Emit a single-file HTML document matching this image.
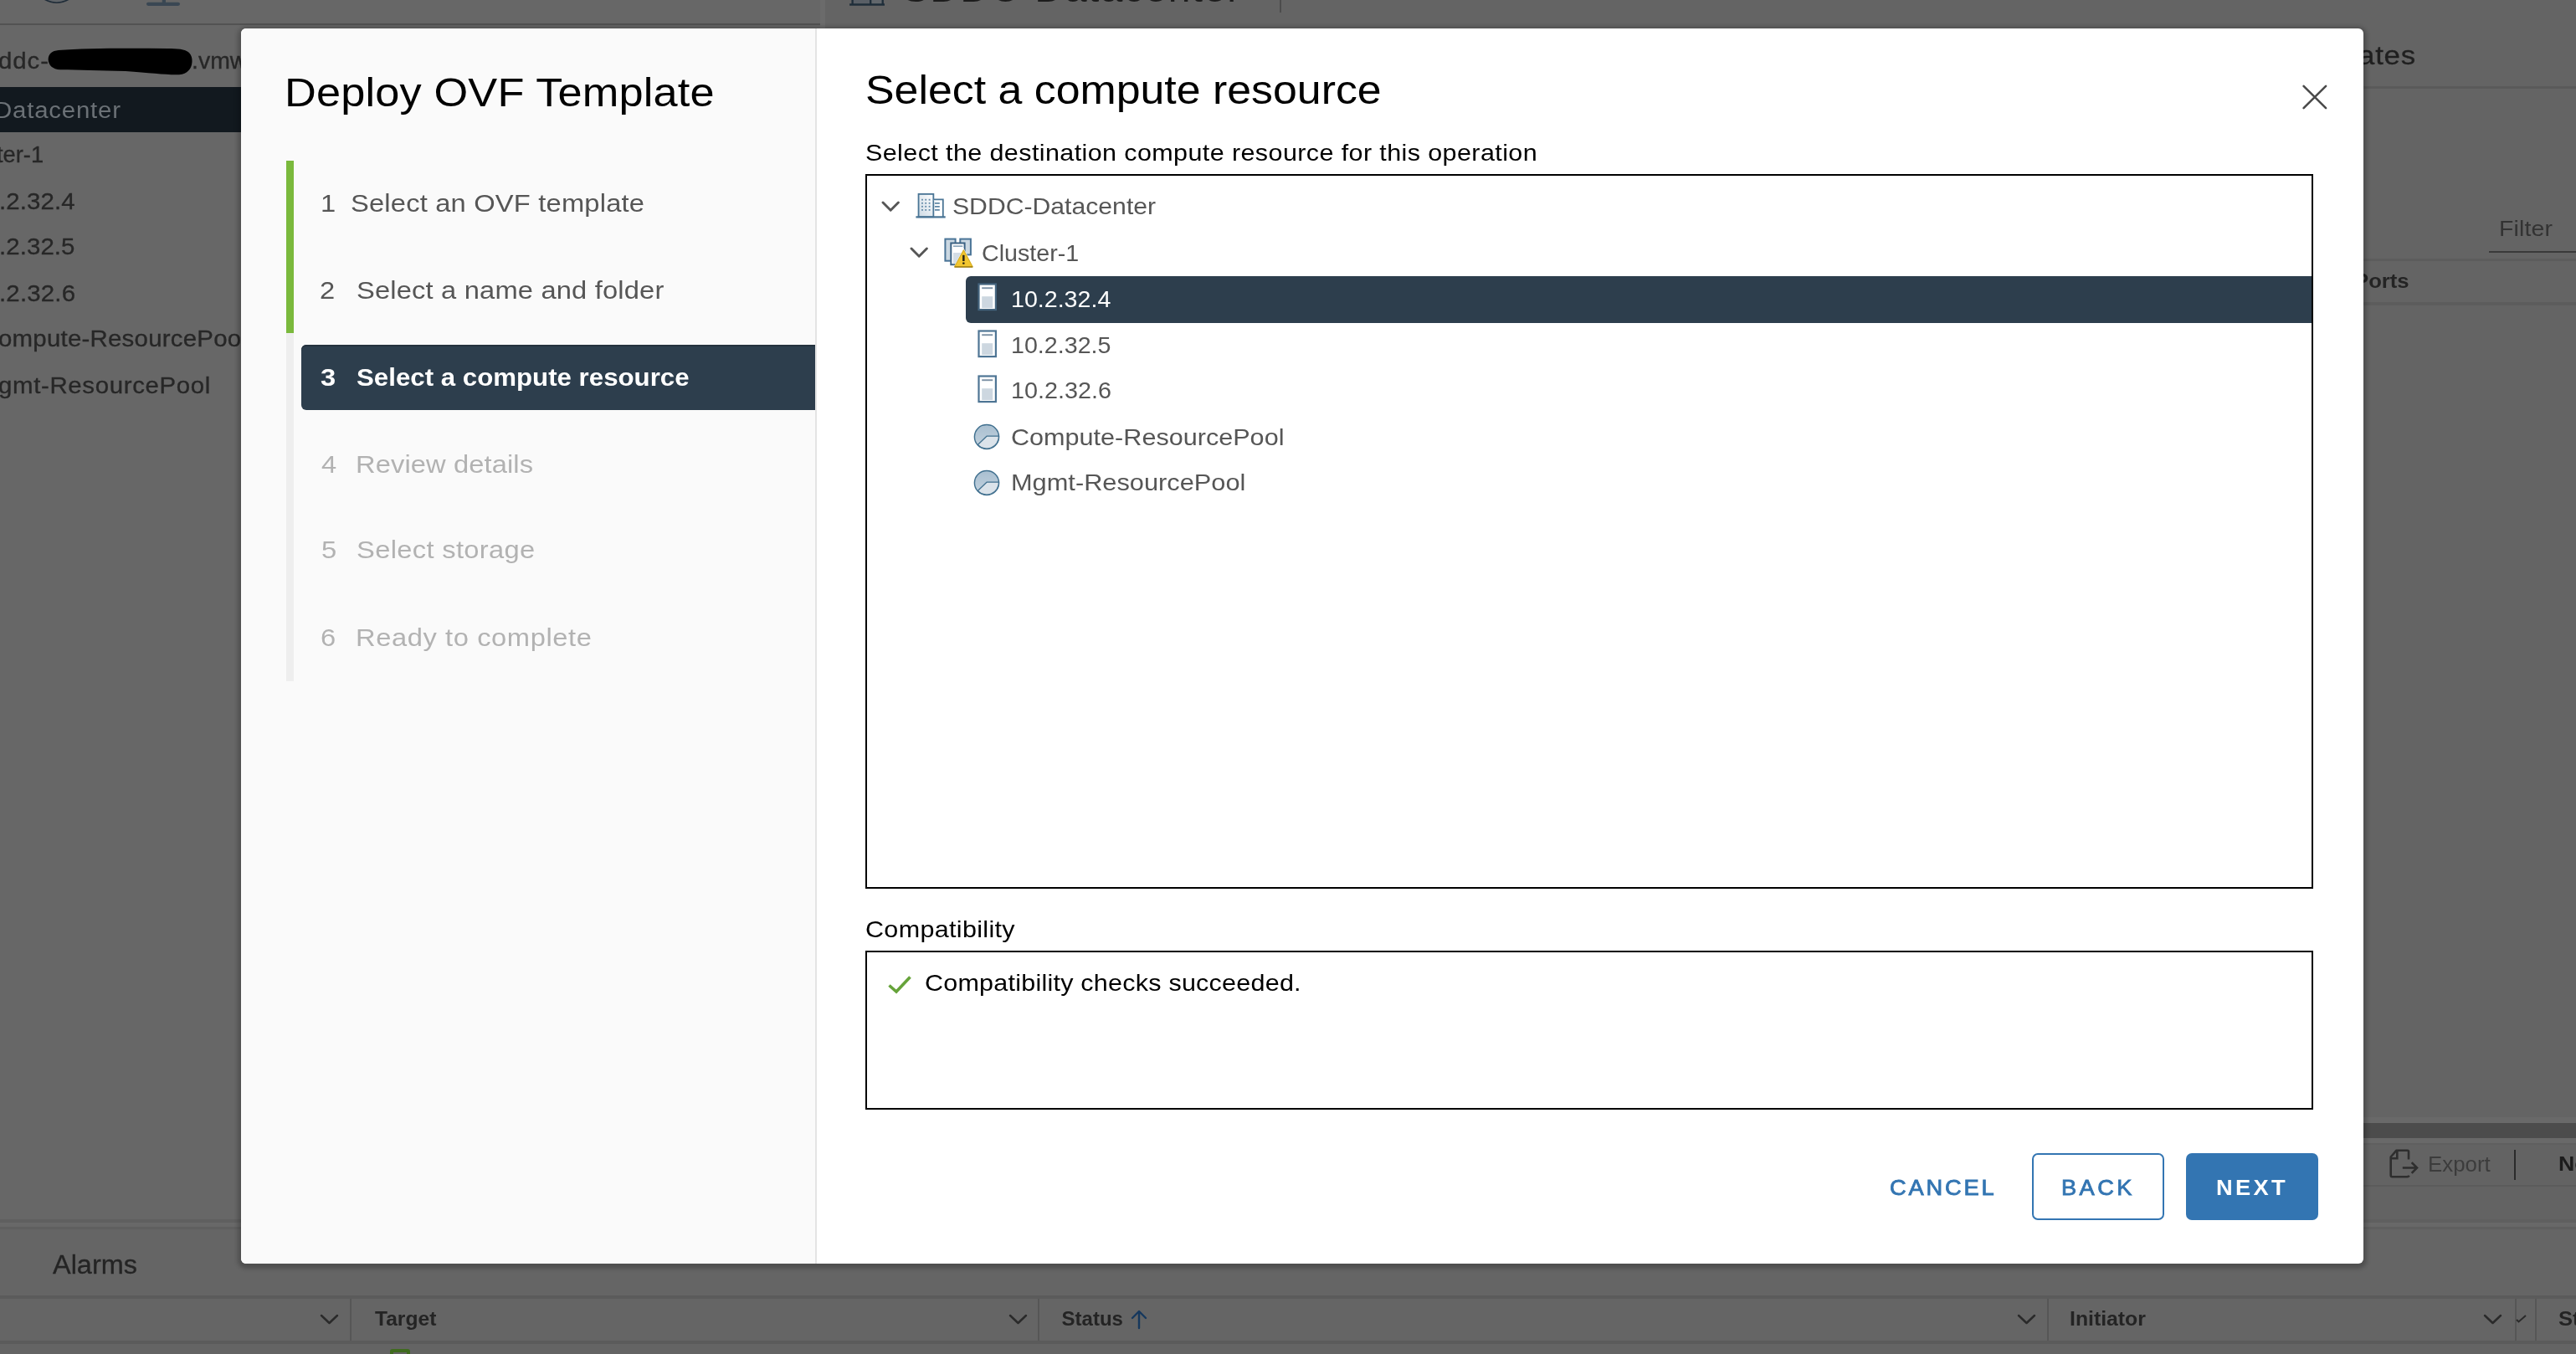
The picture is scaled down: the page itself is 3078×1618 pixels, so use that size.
<!DOCTYPE html>
<html><head><meta charset="utf-8"><title>Deploy OVF Template</title><style>
html,body{margin:0;padding:0}
body{width:3078px;height:1618px;position:relative;overflow:hidden;background:#666;font-family:"Liberation Sans",sans-serif}
.t{position:absolute;white-space:nowrap;line-height:1;transform-origin:0 0}
#bg{position:absolute;left:0;top:0;width:3078px;height:1618px;overflow:hidden;will-change:transform}
#modal{position:absolute;left:0;top:0;width:3078px;height:1618px;will-change:transform}
#modal:before{content:"";position:absolute;left:288px;top:34px;width:2536px;height:1475.5px;background:#fff;border-radius:6px;box-shadow:0 2px 5px 4px rgba(0,0,0,.22)}
#side{position:absolute;left:288px;top:34px;width:686px;height:1475.5px;background:#fafafa;border-right:2px solid #e4e4e4;border-radius:6px 0 0 6px}
#active{position:absolute;left:360px;top:412px;width:614px;height:78px;background:#2d3e4d;border-radius:6px 0 0 6px;box-shadow:inset 0 2px 0 #25323e}
#tree{position:absolute;left:1034px;top:208px;width:1726px;height:850px;border:2px solid #000}
#compat{position:absolute;left:1034px;top:1136px;width:1726px;height:186px;border:2px solid #000}
#sel{position:absolute;left:1154px;top:330px;width:1608px;height:55.7px;background:#2d3e4d;border-radius:6px 0 0 6px}
#back{position:absolute;left:2428px;top:1378px;width:154px;height:76px;border:2px solid #3375b2;border-radius:7px}
#next{position:absolute;left:2612px;top:1378px;width:158px;height:80px;background:#3375b2;border-radius:7px}
</style></head><body>
<div id="bg">
<div style="position:absolute;left:0px;top:0px;width:980px;height:1457px;background:#676767;"></div>
<div style="position:absolute;left:986px;top:0px;width:2092px;height:1457px;background:#646464;"></div>
<div style="position:absolute;left:0px;top:28px;width:980px;height:2px;background:#525252;"></div>
<div style="position:absolute;left:980px;top:0px;width:6px;height:40px;background:#6b6b6b;"></div>
<svg style="position:absolute;left:40px;top:0" width="200" height="10" viewBox="0 0 200 10"><path d="M9.7 -3 Q27.7 9.5 45.7 -3" fill="#5f6468" stroke="#1f2c38" stroke-width="1.6"/><rect x="135" y="2.7" width="40" height="4.2" rx="2.1" fill="#3a4753"/><rect x="153.8" y="-2" width="4.2" height="6" fill="#3a4753"/></svg>
<svg style="position:absolute;left:1014px;top:0" width="50" height="10" viewBox="0 0 50 10"><rect x="4.6" y="0" width="21.6" height="5" fill="#595f66"/><rect x="26.2" y="0" width="14.5" height="5" fill="#62676c"/><path d="M1.1 5.5H43" stroke="#1f2e3a" stroke-width="2.3"/><path d="M4.6 0V5M26.2 0V5M40.7 0V5" stroke="#1f2e3a" stroke-width="2.3"/></svg>
<div class="t " style="left:1078.00px;top:-34.75px;font-size:44px;font-weight:400;color:#1c1c1c;letter-spacing:1.164px;transform:scaleX(1.0900);">SDDC-Datacenter</div>
<div style="position:absolute;left:1529px;top:0px;width:2px;height:15px;background:#4c4c4c;"></div>
<div class="t " style="left:-2.42px;top:59.94px;font-size:27px;font-weight:400;color:#272727;letter-spacing:0.836px;transform:scaleX(1.0900);-webkit-text-stroke:0.3px #272727;">ddc-</div>
<div class="t " style="left:229.28px;top:59.94px;font-size:27px;font-weight:400;color:#272727;letter-spacing:-0.000px;transform:scaleX(1.0537);-webkit-text-stroke:0.3px #272727;">.vmw</div>
<svg style="position:absolute;left:50px;top:50px" width="190" height="48" viewBox="50 50 190 48"><path d="M57.6 71 C58 64 62 60.8 70 60 C100 57.6 150 57.4 200 58 C212 58 221 58.5 226 63 C229 66 229.8 70 229.5 74 C229 82 224 88.5 214 89.2 C200 89.8 180 87 150 85 C120 84 95 83.6 72 83.2 C63 83 58 78 57.6 71 Z" fill="#000"/></svg>
<div style="position:absolute;left:0px;top:104px;width:288px;height:54px;background:#12191f;"></div>
<div class="t " style="left:-6.80px;top:118.54px;font-size:27px;font-weight:400;color:#6b7176;letter-spacing:0.712px;transform:scaleX(1.0900);">Datacenter</div>
<div class="t " style="left:-4.00px;top:172.34px;font-size:27px;font-weight:400;color:#272727;letter-spacing:0.000px;transform:scaleX(1.0106);-webkit-text-stroke:0.3px #272727;">ter-1</div>
<div class="t " style="left:-0.80px;top:228.34px;font-size:27px;font-weight:400;color:#272727;letter-spacing:0.081px;transform:scaleX(1.0900);-webkit-text-stroke:0.3px #272727;">.2.32.4</div>
<div class="t " style="left:-0.80px;top:282.34px;font-size:27px;font-weight:400;color:#272727;letter-spacing:0.075px;transform:scaleX(1.0900);-webkit-text-stroke:0.3px #272727;">.2.32.5</div>
<div class="t " style="left:-0.80px;top:338.34px;font-size:27px;font-weight:400;color:#272727;letter-spacing:0.152px;transform:scaleX(1.0900);-webkit-text-stroke:0.3px #272727;">.2.32.6</div>
<div class="t " style="left:-2.42px;top:392.04px;font-size:27px;font-weight:400;color:#272727;letter-spacing:0.207px;transform:scaleX(1.0900);-webkit-text-stroke:0.3px #272727;">ompute-ResourcePoo</div>
<div class="t " style="left:-2.42px;top:447.54px;font-size:27px;font-weight:400;color:#272727;letter-spacing:0.590px;transform:scaleX(1.0900);-webkit-text-stroke:0.3px #272727;">gmt-ResourcePool</div>
<div class="t " style="left:2817.91px;top:50.41px;font-size:32px;font-weight:400;color:#1f1f1f;letter-spacing:0.689px;transform:scaleX(1.0900);-webkit-text-stroke:0.3px #1f1f1f;">ates</div>
<div style="position:absolute;left:2824px;top:103px;width:254px;height:3px;background:#5a5a5a;"></div>
<div class="t " style="left:2986.29px;top:259.99px;font-size:26px;font-weight:400;color:#333;letter-spacing:0.161px;transform:scaleX(1.0900);">Filter</div>
<div style="position:absolute;left:2974px;top:299.5px;width:104px;height:2.2px;background:#3a3a3a;"></div>
<div style="position:absolute;left:2824px;top:309px;width:254px;height:3px;background:#5c5c5c;"></div>
<div class="t " style="left:2813.39px;top:323.68px;font-size:24px;font-weight:700;color:#242424;letter-spacing:0.000px;transform:scaleX(1.0701);">Ports</div>
<div style="position:absolute;left:2824px;top:361px;width:254px;height:4px;background:#5c5c5c;"></div>
<div style="position:absolute;left:2824px;top:1335px;width:254px;height:7px;background:#696969;"></div>
<div style="position:absolute;left:2824px;top:1342px;width:254px;height:18px;background:#4c4c4c;"></div>
<div style="position:absolute;left:2824px;top:1360px;width:254px;height:6px;background:#696969;"></div>
<div style="position:absolute;left:2824px;top:1366px;width:254px;height:2px;background:#5f5f5f;"></div>
<div style="position:absolute;left:2824px;top:1368px;width:254px;height:48px;background:#636363;"></div>
<svg style="position:absolute;left:2852px;top:1371px" width="40" height="40" viewBox="0 0 40 40"><path d="M26 14.5V5.2Q26 3.7 24.5 3.7H11.5L4.7 11.5V33.5Q4.7 35.2 6.4 35.2H24.3Q26 35.2 26.6 33.8" fill="none" stroke="#2e2e2e" stroke-width="2.6" stroke-linejoin="round"/><path d="M4.7 13.2H12.3V4" fill="none" stroke="#2e2e2e" stroke-width="2.6"/><path d="M18.8 24.5H35.5M29.7 18.2L36 24.5L29.7 30.8" fill="none" stroke="#2e2e2e" stroke-width="2.6"/></svg>
<div class="t " style="left:2900.98px;top:1379.04px;font-size:25px;font-weight:400;color:#3c3c3c;letter-spacing:0.000px;transform:scaleX(1.0343);">Export</div>
<div style="position:absolute;left:3004px;top:1374px;width:2.4px;height:36px;background:#2b2b2b;"></div>
<div class="t " style="left:3057.23px;top:1379.26px;font-size:24.5px;font-weight:700;color:#1c1c1c;letter-spacing:0.000px;transform:scaleX(1.0900);">Ne</div>
<div style="position:absolute;left:2824px;top:1416px;width:254px;height:4px;background:#5b5b5b;"></div>
<div style="position:absolute;left:2824px;top:1418px;width:254px;height:39px;background:#636363;"></div>
<div style="position:absolute;left:0px;top:1457px;width:3078px;height:161px;background:#656565;"></div>
<div style="position:absolute;left:0px;top:1457px;width:3078px;height:4px;background:#5f5f5f;"></div>
<div style="position:absolute;left:0px;top:1461px;width:3078px;height:5px;background:#686868;"></div>
<div style="position:absolute;left:0px;top:1466px;width:3078px;height:3px;background:#5f5f5f;"></div>
<div class="t " style="left:62.50px;top:1496.36px;font-size:31px;font-weight:400;color:#242424;letter-spacing:-0.000px;transform:scaleX(1.0473);-webkit-text-stroke:0.3px #242424;">Alarms</div>
<div style="position:absolute;left:0px;top:1548px;width:3078px;height:4px;background:#5b5b5b;"></div>
<div style="position:absolute;left:0px;top:1602px;width:3078px;height:4px;background:#5b5b5b;"></div>
<div style="position:absolute;left:0px;top:1606px;width:3078px;height:12px;background:#646464;"></div>
<svg style="position:absolute;left:382px;top:1570px" width="23" height="14" viewBox="-2 -2 23 14"><path d="M0 0L9.5 9L19 0" fill="none" stroke="#2a2a2a" stroke-width="2.5" stroke-linecap="round" stroke-linejoin="round"/></svg>
<div style="position:absolute;left:418px;top:1552px;width:2px;height:50px;background:#565656;"></div>
<div class="t " style="left:448.00px;top:1563.68px;font-size:24px;font-weight:700;color:#242424;letter-spacing:0.000px;transform:scaleX(1.0245);">Target</div>
<div style="position:absolute;left:466px;top:1612px;width:16px;height:8px;border:4px solid #3f6a1f;border-radius:3px"></div>
<svg style="position:absolute;left:1205px;top:1570px" width="23" height="14" viewBox="-2 -2 23 14"><path d="M0 0L9.5 9L19 0" fill="none" stroke="#2a2a2a" stroke-width="2.5" stroke-linecap="round" stroke-linejoin="round"/></svg>
<div style="position:absolute;left:1240px;top:1552px;width:2px;height:50px;background:#565656;"></div>
<div class="t " style="left:1268.62px;top:1563.68px;font-size:24px;font-weight:700;color:#242424;letter-spacing:0.000px;transform:scaleX(1.0000);">Status</div>
<svg style="position:absolute;left:1350px;top:1565px" width="22" height="24" viewBox="0 0 22 24"><path d="M11 22V3M3 10L11 2L19 10" fill="none" stroke="#16385d" stroke-width="2.4" stroke-linecap="round" stroke-linejoin="round"/></svg>
<svg style="position:absolute;left:2410px;top:1570px" width="23" height="14" viewBox="-2 -2 23 14"><path d="M0 0L9.5 9L19 0" fill="none" stroke="#2a2a2a" stroke-width="2.5" stroke-linecap="round" stroke-linejoin="round"/></svg>
<div style="position:absolute;left:2446px;top:1552px;width:2px;height:50px;background:#565656;"></div>
<div class="t " style="left:2473.45px;top:1563.68px;font-size:24px;font-weight:700;color:#242424;letter-spacing:0.000px;transform:scaleX(1.0330);">Initiator</div>
<svg style="position:absolute;left:2967px;top:1570px" width="23" height="14" viewBox="-2 -2 23 14"><path d="M0 0L9.5 9L19 0" fill="none" stroke="#2a2a2a" stroke-width="2.5" stroke-linecap="round" stroke-linejoin="round"/></svg>
<div style="position:absolute;left:3005px;top:1552px;width:2px;height:50px;background:#565656;"></div>
<svg style="position:absolute;left:3006px;top:1570px" width="14" height="12" viewBox="0 0 14 12"><path d="M1 7L3.5 9.5L12 2" fill="none" stroke="#2a2a2a" stroke-width="2"/></svg>
<div style="position:absolute;left:3029px;top:1552px;width:2px;height:50px;background:#565656;"></div>
<div class="t " style="left:3056.60px;top:1563.68px;font-size:24px;font-weight:700;color:#242424;letter-spacing:0.000px;transform:scaleX(1.0635);">St</div>
</div>
<div id="modal">
<div id="side"></div>
<div class="t " style="left:340.31px;top:87.17px;font-size:48px;font-weight:400;color:#000;letter-spacing:0.144px;transform:scaleX(1.0900);">Deploy OVF Template</div>
<div style="position:absolute;left:342px;top:192px;width:9px;height:622px;background:#eeeeee;"></div>
<div style="position:absolute;left:342px;top:192px;width:9px;height:206px;background:#7ab93c;"></div>
<div id="active"></div>
<div class="t " style="left:383.46px;top:227.60px;font-size:30px;font-weight:400;color:#565656;letter-spacing:0.000px;transform:scaleX(1.0900);">1</div>
<div class="t " style="left:418.98px;top:227.60px;font-size:30px;font-weight:400;color:#565656;letter-spacing:0.166px;transform:scaleX(1.0900);">Select an OVF template</div>
<div class="t " style="left:382.47px;top:332.00px;font-size:30px;font-weight:400;color:#565656;letter-spacing:0.000px;transform:scaleX(1.0900);">2</div>
<div class="t " style="left:425.68px;top:332.00px;font-size:30px;font-weight:400;color:#565656;letter-spacing:0.148px;transform:scaleX(1.0900);">Select a name and folder</div>
<div class="t " style="left:383.49px;top:435.50px;font-size:30px;font-weight:700;color:#fff;letter-spacing:0.000px;transform:scaleX(1.0900);">3</div>
<div class="t " style="left:426.21px;top:435.50px;font-size:30px;font-weight:700;color:#fff;letter-spacing:0.000px;transform:scaleX(1.0412);">Select a compute resource</div>
<div class="t " style="left:384.09px;top:540.00px;font-size:30px;font-weight:400;color:#b2b2b2;letter-spacing:0.000px;transform:scaleX(1.0900);">4</div>
<div class="t " style="left:425.45px;top:540.00px;font-size:30px;font-weight:400;color:#b2b2b2;letter-spacing:0.088px;transform:scaleX(1.0900);">Review details</div>
<div class="t " style="left:383.58px;top:642.00px;font-size:30px;font-weight:400;color:#b2b2b2;letter-spacing:0.000px;transform:scaleX(1.0900);">5</div>
<div class="t " style="left:425.98px;top:642.00px;font-size:30px;font-weight:400;color:#b2b2b2;letter-spacing:0.297px;transform:scaleX(1.0900);">Select storage</div>
<div class="t " style="left:383.07px;top:746.61px;font-size:30px;font-weight:400;color:#b2b2b2;letter-spacing:0.000px;transform:scaleX(1.0900);">6</div>
<div class="t " style="left:425.45px;top:746.61px;font-size:30px;font-weight:400;color:#b2b2b2;letter-spacing:0.529px;transform:scaleX(1.0900);">Ready to complete</div>
<div class="t " style="left:1034.38px;top:84.37px;font-size:48px;font-weight:400;color:#000;letter-spacing:0.000px;transform:scaleX(1.0801);">Select a compute resource</div>
<svg style="position:absolute;left:2746px;top:96px" width="40" height="40" viewBox="0 0 40 40"><path d="M6.6 6.9L33.1 33.1M33.1 6.9L6.6 33.1" stroke="#4a4a4a" stroke-width="2.6" stroke-linecap="round"/></svg>
<div class="t " style="left:1033.85px;top:168.70px;font-size:28px;font-weight:400;color:#000;letter-spacing:0.358px;transform:scaleX(1.0900);">Select the destination compute resource for this operation</div>
<div id="tree"></div>
<svg style="position:absolute;left:1053.3px;top:239.6px" width="22.4" height="14.2" viewBox="-2 -2 22.4 14.2"><path d="M0 0L9.2 9.2L18.4 0" fill="none" stroke="#565656" stroke-width="2.9" stroke-linecap="round" stroke-linejoin="round"/></svg>
<svg style="position:absolute;left:1087.3px;top:295.4px" width="22.4" height="14.2" viewBox="-2 -2 22.4 14.2"><path d="M0 0L9.2 9.2L18.4 0" fill="none" stroke="#565656" stroke-width="2.9" stroke-linecap="round" stroke-linejoin="round"/></svg>
<svg style="position:absolute;left:1092px;top:229px" width="40" height="34" viewBox="0 0 40 34"><defs><linearGradient id="gdc" x1="1" y1="0" x2="0" y2="1"><stop offset="0" stop-color="#ffffff"/><stop offset="0.55" stop-color="#e3eaf0"/><stop offset="1" stop-color="#cddae4"/></linearGradient></defs><rect x="5.55" y="2.9" width="17.8" height="27.3" fill="url(#gdc)" stroke="#4a7595" stroke-width="1.8"/><path d="M23.3 9.4H34.8V30" fill="#fff" stroke="#4a7595" stroke-width="1.8"/><path d="M2.4 30.4H37.7" stroke="#4a7595" stroke-width="2.4"/><g fill="#6188a6"><rect x="9.10" y="8.80" width="1.8" height="1.8"/><rect x="9.10" y="12.90" width="1.8" height="1.8"/><rect x="9.10" y="16.90" width="1.8" height="1.8"/><rect x="9.10" y="21.00" width="1.8" height="1.8"/><rect x="13.30" y="8.80" width="1.8" height="1.8"/><rect x="13.30" y="12.90" width="1.8" height="1.8"/><rect x="13.30" y="16.90" width="1.8" height="1.8"/><rect x="13.30" y="21.00" width="1.8" height="1.8"/><rect x="17.70" y="8.80" width="1.8" height="1.8"/><rect x="17.70" y="12.90" width="1.8" height="1.8"/><rect x="17.70" y="16.90" width="1.8" height="1.8"/><rect x="17.70" y="21.00" width="1.8" height="1.8"/></g><path d="M25 13.8H30.8M25 17.8H30.8M25 21.9H30.8" stroke="#5d86a5" stroke-width="1.7"/></svg>
<div class="t " style="left:1138.26px;top:232.17px;font-size:28.5px;font-weight:400;color:#565656;letter-spacing:0.000px;transform:scaleX(1.0585);">SDDC-Datacenter</div>
<svg style="position:absolute;left:1126px;top:282px" width="40" height="40" viewBox="0 0 40 40"><rect x="3.4" y="3.6" width="12.2" height="26.1" fill="#cbd8e2" stroke="#4a7497" stroke-width="2"/><rect x="21.3" y="3.6" width="12.6" height="18.8" fill="#cbd8e2" stroke="#4a7497" stroke-width="2"/><rect x="10.3" y="8.5" width="16.3" height="25.7" fill="#fff" stroke="#3d6384" stroke-width="2"/><rect x="13" y="20" width="11" height="13.2" fill="#d3dde6"/><path d="M13 12.2H24.3" stroke="#8aa5ba" stroke-width="1.7"/><path d="M25.4 14.6L37.9 38.4H12.9Z" fill="#fff"/><path d="M25.4 16.8L36 36.6H14.8Z" fill="#f2c62f" stroke="#d6ac1f" stroke-width="1.1" stroke-linejoin="round"/><path d="M14.4 37H36.4" stroke="#9c7d10" stroke-width="1.5"/><rect x="24.1" y="22.8" width="2.5" height="7.2" rx="0.6" fill="#2b2410"/><rect x="24.1" y="31.4" width="2.5" height="2.3" rx="0.6" fill="#2b2410"/></svg>
<div class="t " style="left:1172.76px;top:287.87px;font-size:28.5px;font-weight:400;color:#565656;letter-spacing:0.000px;transform:scaleX(1.0051);">Cluster-1</div>
<div id="sel"></div>
<svg style="position:absolute;left:1167.5px;top:338px" width="24" height="34" viewBox="0 0 24 34"><rect x="1.5" y="1.5" width="20.4" height="30.6" fill="#fff" stroke="#44647e" stroke-width="2.2"/><rect x="5.2" y="16.2" width="13" height="13.8" fill="#cdd7e0"/><rect x="5.2" y="5.3" width="13" height="1.9" fill="#7a8fa3"/></svg>
<div class="t " style="left:1207.71px;top:342.87px;font-size:28.5px;font-weight:400;color:#fff;letter-spacing:0.000px;transform:scaleX(1.0037);">10.2.32.4</div>
<svg style="position:absolute;left:1167.5px;top:394px" width="24" height="34" viewBox="0 0 24 34"><rect x="1.5" y="1.5" width="20.4" height="30.6" fill="#fff" stroke="#4e7594" stroke-width="2.2"/><rect x="5.2" y="16.2" width="13" height="13.8" fill="#cdd7e0"/><rect x="5.2" y="5.3" width="13" height="1.9" fill="#7a8fa3"/></svg>
<div class="t " style="left:1207.71px;top:397.67px;font-size:28.5px;font-weight:400;color:#565656;letter-spacing:-0.000px;transform:scaleX(1.0050);">10.2.32.5</div>
<svg style="position:absolute;left:1167.5px;top:448px" width="24" height="34" viewBox="0 0 24 34"><rect x="1.5" y="1.5" width="20.4" height="30.6" fill="#fff" stroke="#4e7594" stroke-width="2.2"/><rect x="5.2" y="16.2" width="13" height="13.8" fill="#cdd7e0"/><rect x="5.2" y="5.3" width="13" height="1.9" fill="#7a8fa3"/></svg>
<div class="t " style="left:1207.70px;top:452.07px;font-size:28.5px;font-weight:400;color:#565656;letter-spacing:0.000px;transform:scaleX(1.0093);">10.2.32.6</div>
<svg style="position:absolute;left:1162.1px;top:505.3px" width="34" height="34" viewBox="0 0 34 34"><defs><linearGradient id="g505" x1="0" y1="0" x2="0" y2="1"><stop offset="0" stop-color="#a9bfd0"/><stop offset="1" stop-color="#c4d3df"/></linearGradient></defs><circle cx="17" cy="17" r="14.6" fill="url(#g505)" stroke="#41708f" stroke-width="1.45"/><path d="M6.3 26.5 L17 16.2 H31.5 A14.6 14.6 0 0 1 6.3 26.5Z" fill="#dbe3ea" stroke="#41708f" stroke-width="1.25" stroke-linejoin="round"/></svg>
<div class="t " style="left:1208.37px;top:507.87px;font-size:28.5px;font-weight:400;color:#565656;letter-spacing:0.000px;transform:scaleX(1.0733);">Compute-ResourcePool</div>
<svg style="position:absolute;left:1162.1px;top:559.5px" width="34" height="34" viewBox="0 0 34 34"><defs><linearGradient id="g559" x1="0" y1="0" x2="0" y2="1"><stop offset="0" stop-color="#a9bfd0"/><stop offset="1" stop-color="#c4d3df"/></linearGradient></defs><circle cx="17" cy="17" r="14.6" fill="url(#g559)" stroke="#41708f" stroke-width="1.45"/><path d="M6.3 26.5 L17 16.2 H31.5 A14.6 14.6 0 0 1 6.3 26.5Z" fill="#dbe3ea" stroke="#41708f" stroke-width="1.25" stroke-linejoin="round"/></svg>
<div class="t " style="left:1207.90px;top:562.17px;font-size:28.5px;font-weight:400;color:#565656;letter-spacing:0.000px;transform:scaleX(1.0792);">Mgmt-ResourcePool</div>
<div class="t " style="left:1033.97px;top:1097.00px;font-size:28px;font-weight:400;color:#000;letter-spacing:0.300px;transform:scaleX(1.0900);">Compatibility</div>
<div id="compat"></div>
<svg style="position:absolute;left:1058px;top:1162px" width="36" height="30" viewBox="0 0 36 30"><path d="M4.5 15.5L13 23L29.5 5.5" fill="none" stroke="#66a33a" stroke-width="3.6" stroke-linejoin="miter"/></svg>
<div class="t " style="left:1104.87px;top:1161.30px;font-size:28px;font-weight:400;color:#000;letter-spacing:0.209px;transform:scaleX(1.0900);">Compatibility checks succeeded.</div>
<div class="t " style="left:2258.02px;top:1406.84px;font-size:25px;font-weight:400;color:#3375b2;letter-spacing:2.589px;transform:scaleX(1.0900);-webkit-text-stroke:0.8px #3375b2;">CANCEL</div>
<div id="back"></div>
<div class="t " style="left:2462.57px;top:1406.84px;font-size:25px;font-weight:400;color:#3375b2;letter-spacing:3.124px;transform:scaleX(1.0900);-webkit-text-stroke:0.8px #3375b2;">BACK</div>
<div id="next"></div>
<div class="t " style="left:2648.10px;top:1406.84px;font-size:25px;font-weight:700;color:#fff;letter-spacing:3.018px;transform:scaleX(1.0900);">NEXT</div>
</div>
</body></html>
